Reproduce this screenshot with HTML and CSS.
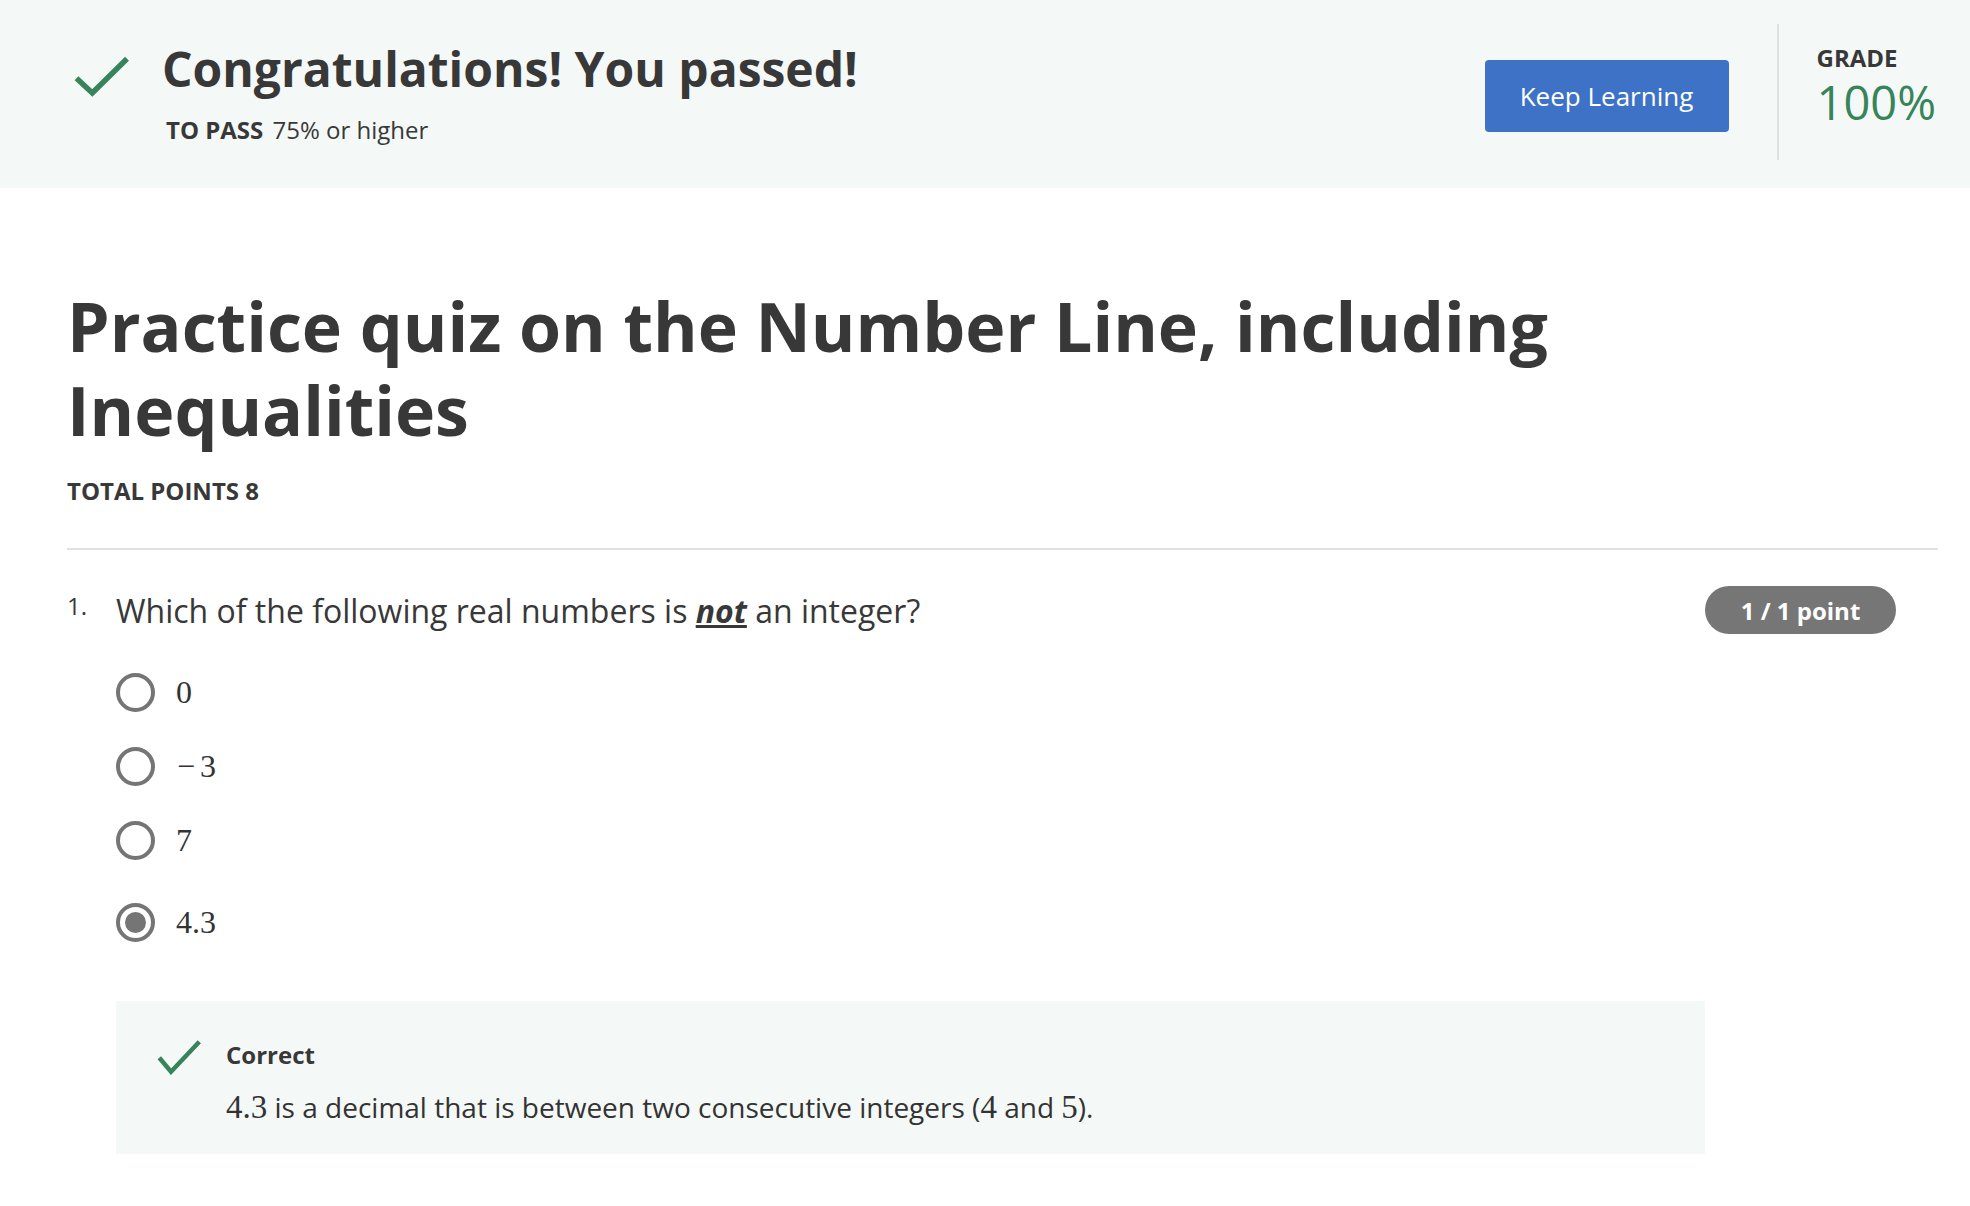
FILE: index.html
```html
<!DOCTYPE html>
<html lang="en">
<head>
<meta charset="utf-8">
<title>Practice quiz on the Number Line, including Inequalities</title>
<link rel="stylesheet" href="styles.css">
</head>
<body>
<header class="result">
  <div class="result-left">
    <svg class="result-check" width="60" height="46" viewBox="0 0 60 46"><polyline points="4.5,26.3 20.3,41 55,6.8" fill="none" stroke="#38845a" stroke-width="5.5"/></svg>
    <div class="result-text">
      <h2 class="result-title">Congratulations! You passed!</h2>
      <div class="result-pass"><span class="pass-label">TO PASS</span> 75% or higher</div>
    </div>
  </div>
  <div class="result-right">
    <button class="btn-primary">Keep Learning</button>
    <div class="vdivider"></div>
    <div class="grade">
      <div class="grade-label">GRADE</div>
      <div class="grade-value">100%</div>
    </div>
  </div>
</header>
<main class="quiz">
  <h1 class="quiz-title">Practice quiz on the Number Line, including Inequalities</h1>
  <div class="total-points">TOTAL POINTS 8</div>
  <div class="hr"></div>
  <section class="question">
    <div class="q-num">1.</div>
    <div class="q-body">
      <div class="q-text">Which of the following real numbers is <em class="q-not">not</em> an integer?</div>
      <div class="options">
        <div class="option"><span class="radio"></span><span class="math">0</span></div>
        <div class="option"><span class="radio"></span><span class="math"><span class="minus">&minus;</span>3</span></div>
        <div class="option"><span class="radio"></span><span class="math">7</span></div>
        <div class="option option-checked"><span class="radio radio-on"></span><span class="math">4.3</span></div>
      </div>
      <div class="feedback">
        <svg class="fb-check" width="45" height="36" viewBox="0 0 45 36"><polyline points="2.3,18.7 14,32.7 42.3,2.7" fill="none" stroke="#38845a" stroke-width="4.5"/></svg>
        <div class="fb-text">
          <div class="fb-title">Correct</div>
          <div class="fb-expl"><span class="math-in">4.3</span> is a decimal that is between two consecutive integers (<span class="math-in">4</span> and <span class="math-in">5</span>).</div>
        </div>
      </div>
    </div>
    <div class="q-points"><span class="badge">1 / 1 point</span></div>
  </section>
</main>
</body>
</html>
```
FILE: styles.css
```css
html, body {
  margin: 0;
  padding: 0;
  background: #ffffff;
}
body {
  font-family: "Open Sans", "Noto Sans", sans-serif;
  color: #383838;
}
.result {
  display: flex;
  justify-content: space-between;
  align-items: flex-start;
  height: 188px;
  box-sizing: border-box;
  padding: 0 34px 0 72px;
  background: #f4f9f7;
}
.result-left {
  display: flex;
  align-items: flex-start;
}
.result-check {
  margin-top: 52px;
  display: block;
}
.result-text {
  margin-left: 30px;
}
.result-title {
  margin: 39px 0 0 0;
  font-size: 48px;
  line-height: 60px;
  font-weight: 700;
}
.result-pass {
  margin-top: 16px;
  padding-left: 4px;
  font-size: 24px;
  line-height: 30px;
}
.pass-label {
  font-weight: 700;
  margin-right: 3px;
}
.result-right {
  display: flex;
  align-items: flex-start;
}
.btn-primary {
  margin-top: 60px;
  height: 72px;
  width: 244px;
  border: none;
  border-radius: 4px;
  background: #3d72c7;
  color: #ffffff;
  font-family: "Open Sans", sans-serif;
  font-size: 26px;
  font-weight: 400;
  padding: 0;
}
.vdivider {
  margin: 24px 0 0 48px;
  width: 2px;
  height: 136px;
  background: #dfe1e0;
}
.grade {
  margin: 45px 0 0 38px;
}
.grade-label {
  font-size: 24px;
  line-height: 25px;
  font-weight: 700;
}
.grade-value {
  font-size: 47px;
  line-height: 64px;
  color: #38845a;
}
.quiz {
  padding: 0 32px 60px 67px;
}
.quiz-title {
  margin: 96px 0 0 0;
  font-size: 68px;
  line-height: 84px;
  font-weight: 700;
}
.total-points {
  margin-top: 24px;
  font-size: 24px;
  line-height: 30px;
  font-weight: 700;
}
.hr {
  margin-top: 42px;
  height: 2px;
  background: #e1e1e1;
}
.question {
  display: grid;
  grid-template-columns: 49px 1589px 191px;
  margin-top: 36px;
}
.q-num {
  margin-top: 5px;
  font-size: 24px;
  line-height: 30px;
}
.q-text {
  padding-top: 3px;
  font-size: 32px;
  line-height: 44px;
}
.q-not {
  font-weight: 700;
  text-decoration: underline;
}
.options {
  margin-top: 22px;
}
.option {
  display: flex;
  align-items: center;
  height: 74px;
}
.option-checked {
  margin-top: 8px;
}
.radio {
  width: 39px;
  height: 39px;
  box-sizing: border-box;
  border: 4px solid #757575;
  border-radius: 50%;
  flex: none;
  display: flex;
  align-items: center;
  justify-content: center;
}
.radio-on::after {
  content: "";
  width: 21px;
  height: 21px;
  border-radius: 50%;
  background: #757575;
}
.math {
  margin-left: 21px;
  font-family: "Liberation Serif", "Times New Roman", serif;
  font-size: 32px;
  color: #333333;
}
.minus {
  margin-right: 5px;
  margin-left: 1px;
}
.feedback {
  margin-top: 42px;
  height: 153px;
  box-sizing: border-box;
  padding: 38px 0 0 41px;
  background: #f4f9f7;
  display: flex;
  align-items: flex-start;
}
.fb-check {
  display: block;
  margin-top: 0;
}
.fb-text {
  margin-left: 24px;
}
.fb-title {
  font-size: 24px;
  line-height: 32px;
  font-weight: 700;
}
.fb-expl {
  margin-top: 18px;
  font-size: 28px;
  line-height: 36px;
  color: #333333;
}
.math-in {
  font-family: "Liberation Serif", "Times New Roman", serif;
  font-size: 33px;
}
.q-points {
  display: flex;
  justify-content: flex-start;
  align-items: flex-start;
}
.badge {
  display: inline-flex;
  align-items: center;
  justify-content: center;
  width: 191px;
  height: 48px;
  border-radius: 24px;
  background: #767676;
  color: #ffffff;
  font-size: 24px;
  font-weight: 700;
}
```
